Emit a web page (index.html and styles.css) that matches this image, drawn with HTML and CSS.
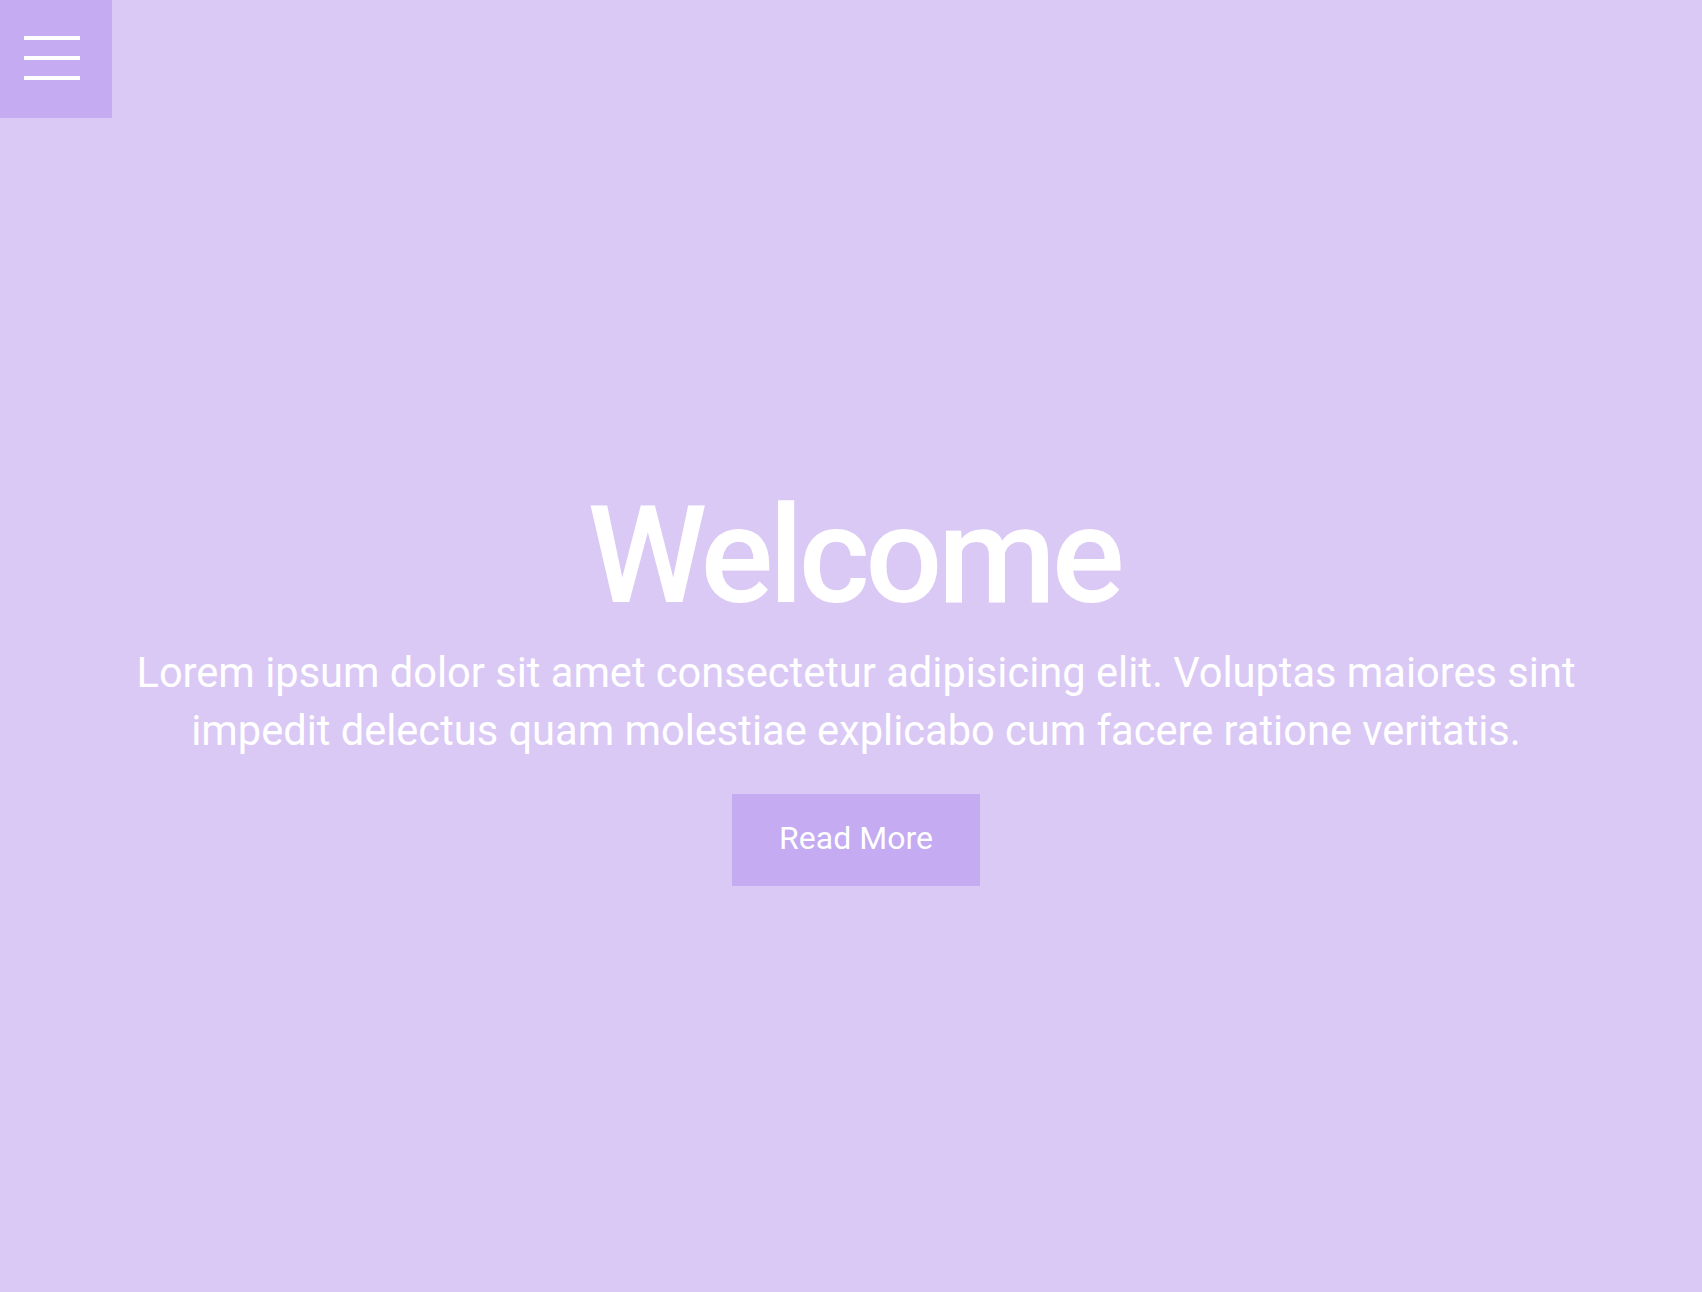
FILE: index.html
```html
<!DOCTYPE html>
<html lang="en">
<head>
<meta charset="utf-8">
<title>Welcome</title>
<link rel="stylesheet" href="styles.css">
</head>
<body>
<button class="menu-toggle" aria-label="Menu">
  <span class="bar"></span>
  <span class="bar"></span>
  <span class="bar"></span>
</button>
<main class="hero">
  <h1 class="hero-title">Welcome</h1>
  <p class="hero-text">Lorem ipsum dolor sit amet consectetur adipisicing elit. Voluptas maiores sint impedit delectus quam molestiae explicabo cum facere ratione veritatis.</p>
  <a class="hero-btn" href="#">Read More</a>
</main>
</body>
</html>
```
FILE: styles.css
```css
* { box-sizing: border-box; }
html, body { margin: 0; padding: 0; }
body {
  background: #dac9f5;
  font-family: Roboto, "Liberation Sans", sans-serif;
  color: #fff;
  min-height: 100vh;
}
.menu-toggle {
  position: absolute;
  top: 0;
  left: 0;
  width: 112px;
  height: 118px;
  background: #c4abf2;
  border: 0;
  padding: 36px 0 0 24px;
  display: flex;
  flex-direction: column;
  gap: 16px;
  cursor: pointer;
}
.menu-toggle .bar {
  display: block;
  width: 56px;
  height: 4px;
  background: #fff;
}
.hero {
  min-height: 100vh;
  display: flex;
  flex-direction: column;
  align-items: center;
  justify-content: center;
  text-align: center;
  padding: 81px 0 0 10px;
}
.hero-title {
  margin: 0 4.6px 0 0;
  font-size: 136px;
  line-height: 1;
  font-weight: 500;
  letter-spacing: -4.6px;
}
.hero-text {
  margin: 20px 0 0;
  max-width: 1500px;
  font-size: 41.6px;
  line-height: 58px;
  font-weight: 400;
}
.hero-btn {
  margin-top: 34px;
  display: inline-block;
  background: #c4abf2;
  color: #fff;
  text-decoration: none;
  font-size: 32px;
  line-height: 40px;
  padding: 24px 47px 28px;
}
```
